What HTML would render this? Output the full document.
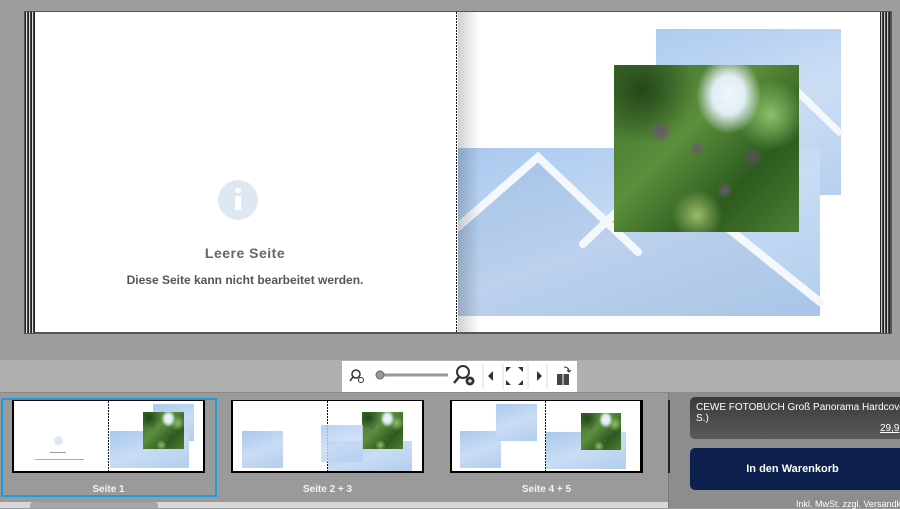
<!DOCTYPE html>
<html><head><meta charset="utf-8"><style>
*{margin:0;padding:0;box-sizing:border-box}
body{width:900px;height:508px;overflow:hidden;background:#9d9d9d;font-family:"Liberation Sans",sans-serif;position:relative}
.a{position:absolute}
.photo{background:
radial-gradient(ellipse at 62% 18%,#f0f6fa 0,#e0eef4 10%,transparent 20%),
radial-gradient(circle at 25% 40%,#6a5570 0,transparent 7%),
radial-gradient(circle at 45% 50%,#6b5672 0,transparent 6%),
radial-gradient(circle at 75% 55%,#5c4c63 0,transparent 6%),
radial-gradient(circle at 60% 75%,#6a5a70 0,transparent 5%),
radial-gradient(circle at 45% 90%,#9abb6a 0,transparent 14%),
radial-gradient(circle at 15% 15%,#24461a 0,transparent 25%),
radial-gradient(circle at 85% 30%,#8cbf6a 0,transparent 18%),
linear-gradient(135deg,#3e6e2a,#5c8f3c 40%,#2d5a1e 70%,#4d7f35);}
.blue{background:linear-gradient(160deg,#a9c8ef,#c9dcf4 50%,#b3cdee)}
.lbl{color:#f2f2f2;font-weight:bold;font-size:10px;text-align:center}
.shade{position:absolute;background:rgba(120,150,190,.18)}
</style></head><body>
<!-- book -->
<div class="a" style="left:24px;top:11px;width:868px;height:323px;background:#555"></div>
<div class="a" style="left:25px;top:12px;width:10px;height:321px;background:repeating-linear-gradient(90deg,#222 0 1px,#ddd 1px 2px,#444 2px 3px)"></div>
<div class="a" style="left:35px;top:12px;width:420px;height:320px;background:#fff"></div>
<div class="a" style="left:455px;top:12px;width:3px;height:320px;background:#fff"></div>
<div class="a" style="left:456px;top:12px;width:1px;height:320px;background:repeating-linear-gradient(180deg,#111 0 2px,#fff 2px 3px)"></div>
<div class="a" style="left:458px;top:12px;width:422px;height:320px;background:#fff;overflow:hidden">
  <div class="a blue" style="left:198px;top:17px;width:185px;height:166px;opacity:.95"></div>
  <div class="a blue" style="left:0;top:136px;width:362px;height:168px"></div>
  <svg class="a" style="left:0;top:0" width="422" height="320">
    <polygon points="0,215 80,145 180,240 125,232 200,160 362,290 362,304 0,304" fill="rgba(130,160,200,.18)"/>
    <polyline points="0,215 80,145 180,240" stroke="#f4f7fb" stroke-width="8" fill="none" stroke-linecap="round"/>
    <polyline points="125,232 200,160 362,290" stroke="#f4f7fb" stroke-width="8" fill="none" stroke-linecap="round"/>
    <polyline points="330,70 383,122" stroke="#f4f7fb" stroke-width="7" fill="none"/>
  </svg>
  <div class="a" style="left:0;top:0;width:22px;height:320px;background:linear-gradient(90deg,rgba(0,0,0,.18),transparent)"></div>
  <div class="a photo" style="left:156px;top:53px;width:185px;height:167px"></div>
</div>
<div class="a" style="left:880px;top:12px;width:10px;height:321px;background:repeating-linear-gradient(90deg,#222 0 1px,#ccc 1px 2px,#444 2px 3px)"></div>
<!-- empty page -->
<div class="a" style="left:218px;top:180px;width:40px;height:40px;border-radius:50%;background:#dde8f3"></div>
<div class="a" style="left:235px;top:188px;width:6px;height:5px;border-radius:3px;background:#fff"></div>
<div class="a" style="left:235px;top:196px;width:6px;height:14px;background:#fff"></div>
<div class="a" style="left:35px;top:245px;width:420px;text-align:center;font-size:14px;font-weight:bold;color:#666;letter-spacing:.5px">Leere Seite</div>
<div class="a" style="left:35px;top:273px;width:420px;text-align:center;font-size:12px;font-weight:bold;color:#555">Diese Seite kann nicht bearbeitet werden.</div>
<!-- toolbar band -->
<div class="a" style="left:0;top:360px;width:900px;height:32px;background:#b0b0b0"></div>
<div class="a" style="left:342px;top:361px;width:235px;height:31px;background:#fff"></div>
<svg class="a" style="left:342px;top:361px" width="235" height="31">
 <circle cx="14" cy="13" r="4" fill="none" stroke="#333" stroke-width="1.5"/><line x1="11" y1="16" x2="8" y2="20" stroke="#333" stroke-width="1.5"/><circle cx="19" cy="19" r="2.5" fill="none" stroke="#333"/>
 <line x1="34" y1="14" x2="106" y2="14" stroke="#999" stroke-width="3"/><circle cx="38" cy="14" r="4" fill="#999" stroke="#666"/>
 <circle cx="121" cy="11" r="6" fill="none" stroke="#333" stroke-width="2"/><line x1="117" y1="16" x2="112" y2="22" stroke="#333" stroke-width="2.5"/><circle cx="128" cy="20" r="4.5" fill="#333"/><path d="M126 20h4M128 18v4" stroke="#fff" stroke-width="1.2"/>
 <line x1="141" y1="3" x2="141" y2="28" stroke="#ddd"/>
 <path d="M151 10l-5 5 5 5z" fill="#333"/>
 <line x1="161" y1="3" x2="161" y2="28" stroke="#ddd"/>
 <path d="M164 6h5l-5 5zM181 6h-5l5 5zM164 24h5l-5-5zM181 24h-5l5-5z" fill="#333"/>
 <line x1="186" y1="3" x2="186" y2="28" stroke="#ddd"/>
 <path d="M195 10l5 5-5 5z" fill="#333"/>
 <line x1="205" y1="3" x2="205" y2="28" stroke="#ddd"/>
 <rect x="215" y="13" width="12" height="11" fill="#444"/><line x1="221" y1="13" x2="221" y2="24" stroke="#fff"/><path d="M222 6q5 0 5 5M225 9l2 2 2-2" stroke="#333" fill="none"/>
</svg>
<!-- bottom area -->
<div class="a" style="left:0;top:392px;width:668px;height:110px;background:#9a9a9a;border-top:1px solid #888"></div>
<div class="a" style="left:668px;top:392px;width:232px;height:116px;background:#8d8d8d;border-left:1px solid #7a7a7a"></div>
<div class="a" style="left:0;top:502px;width:668px;height:6px;background:#d8d8d8"></div>
<div class="a" style="left:30px;top:502px;width:128px;height:6px;background:#a6a6a6;border-radius:3px 3px 0 0"></div>
<!-- thumb1 -->
<div class="a" style="left:1px;top:398px;width:216px;height:99px;border:2px solid #1c9be3"></div>
<div class="a" style="left:12px;top:400px;width:193px;height:73px;background:#000"></div>
<div class="a" style="left:14px;top:401px;width:94px;height:70px;background:#fff"></div>
<div class="a" style="left:54px;top:436px;width:9px;height:9px;border-radius:50%;background:#dde8f3"></div>
<div class="a" style="left:50px;top:452px;width:16px;height:1px;background:#999"></div>
<div class="a" style="left:35px;top:459px;width:49px;height:1px;background:#aaa"></div>
<div class="a" style="left:108px;top:401px;width:1px;height:70px;background:repeating-linear-gradient(180deg,#111 0 2px,#fff 2px 3px)"></div>
<div class="a" style="left:109px;top:401px;width:94px;height:70px;background:#fff;overflow:hidden">
 <div class="a blue" style="left:44px;top:3px;width:41px;height:37px"></div>
 <div class="a blue" style="left:1px;top:30px;width:79px;height:37px"></div>
 <div class="a photo" style="left:34px;top:11px;width:41px;height:37px"></div></div>
<div class="a lbl" style="left:12px;top:484px;width:193px">Seite 1</div>
<!-- thumb2 -->
<div class="a" style="left:231px;top:400px;width:193px;height:73px;background:#000"></div>
<div class="a" style="left:233px;top:401px;width:94px;height:70px;background:#fff"><div class="a blue" style="left:9px;top:30px;width:41px;height:37px"></div></div>
<div class="a" style="left:327px;top:401px;width:1px;height:70px;background:repeating-linear-gradient(180deg,#111 0 2px,#fff 2px 3px)"></div>
<div class="a" style="left:328px;top:401px;width:94px;height:70px;background:#fff;overflow:hidden">
 <div class="a blue" style="left:0;top:40px;width:84px;height:30px"></div>
 <div class="a photo" style="left:34px;top:11px;width:41px;height:37px"></div></div>
<div class="a blue" style="left:321px;top:425px;width:42px;height:37px;opacity:.85"></div>
<div class="a lbl" style="left:231px;top:484px;width:193px">Seite 2 + 3</div>
<!-- thumb3 -->
<div class="a" style="left:450px;top:400px;width:193px;height:73px;background:#000"></div>
<div class="a" style="left:452px;top:401px;width:93px;height:70px;background:#fff">
 <div class="a blue" style="left:8px;top:30px;width:41px;height:37px"></div>
 <div class="a blue" style="left:44px;top:3px;width:41px;height:37px"></div></div>
<div class="a" style="left:545px;top:401px;width:1px;height:70px;background:repeating-linear-gradient(180deg,#111 0 2px,#fff 2px 3px)"></div>
<div class="a" style="left:546px;top:401px;width:94px;height:70px;background:#fff;overflow:hidden">
 <div class="a blue" style="left:0;top:31px;width:80px;height:37px"></div>
 <div class="a photo" style="left:35px;top:12px;width:40px;height:37px"></div></div>
<div class="a" style="left:668px;top:400px;width:2px;height:73px;background:#222"></div>
<div class="a lbl" style="left:450px;top:484px;width:193px">Seite 4 + 5</div>
<!-- right panel -->
<div class="a" style="left:690px;top:397px;width:215px;height:42px;border-radius:5px;background:linear-gradient(#3a3a3a,#5a5a5a);color:#fff;font-size:10px;line-height:11px;padding:5px 6px;overflow:hidden"><div style="white-space:nowrap">CEWE FOTOBUCH Groß Panorama Hardcover &nbsp;(2</div>S.)<div style="position:absolute;left:190px;top:26px;text-decoration:underline">29,9</div></div>
<div class="a" style="left:690px;top:448px;width:215px;height:42px;border-radius:5px;background:#0c1f4d;color:#fff;font-size:11px;font-weight:bold;text-align:center;line-height:42px;padding-right:10px">In den Warenkorb</div>
<div class="a" style="left:796px;top:499px;font-size:9px;color:#fff;white-space:nowrap">Inkl. MwSt. zzgl. Versandk</div>
</body></html>
